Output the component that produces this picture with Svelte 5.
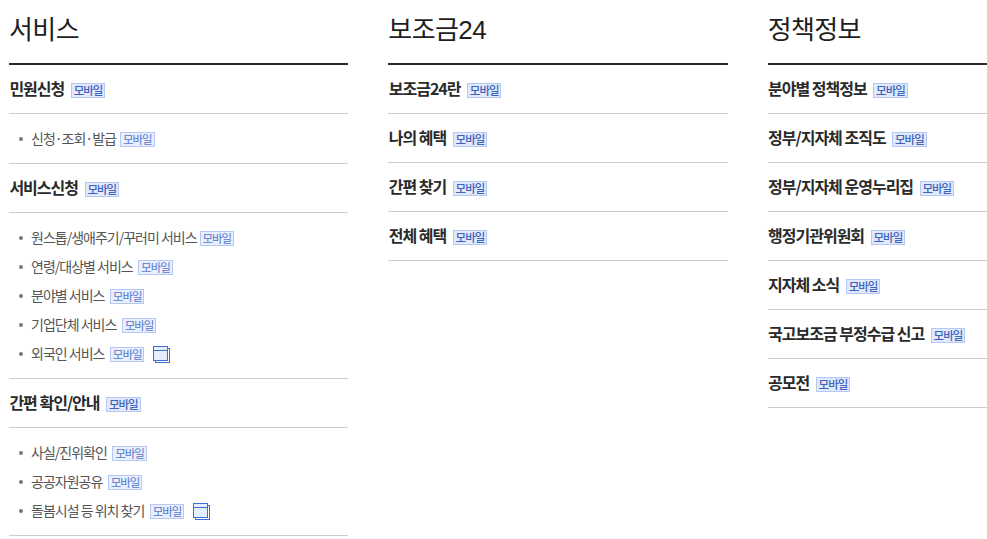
<script>
  const columns = [
    { title: '서비스', groups: [
      { name: '민원신청', items: [{ t: '신청·조회·발급', gap: 'snug' }] },
      { name: '서비스신청', items: [
        { t: '원스톱/생애주기/꾸러미 서비스', gap: 'tight' }, { t: '연령/대상별 서비스' }, { t: '분야별 서비스' }, { t: '기업단체 서비스' }, { t: '외국인 서비스', win: true }
      ] },
      { name: '간편 확인/안내', items: [{ t: '사실/진위확인' }, { t: '공공자원공유' }, { t: '돌봄시설 등 위치 찾기', win: true }] }
    ] },
    { title: '보조금24', groups: [
      { name: '보조금24란' }, { name: '나의 혜택' }, { name: '간편 찾기' }, { name: '전체 혜택' }
    ] },
    { title: '정책정보', groups: [
      { name: '분야별 정책정보' }, { name: '정부/지자체 조직도' }, { name: '정부/지자체 운영누리집' }, { name: '행정기관위원회' }, { name: '지자체 소식' }, { name: '국고보조금 부정수급 신고' }, { name: '공모전' }
    ] }
  ];
</script>

<div class="page">
  {#each columns as col}
    <section class="col">
      <h2>{col.title}</h2>
      {#each col.groups as g}
        <div class="group">
          <span class="name">{g.name}</span><span class="badge strong">모바일</span>
        </div>
        {#if g.items}
          <ul>
            {#each g.items as it}
              <li>
                <span class="text">{it.t}</span><span class="badge {it.gap ?? ''}">모바일</span>
                {#if it.win}
                  <svg class="win" width="17" height="17" viewBox="0 0 17 17" aria-hidden="true">
                    <rect x="2.5" y="2.5" width="14" height="14" fill="#fff" stroke="#3d70d6"/>
                    <rect x="0.5" y="0.5" width="14" height="14" fill="#e6edfc" stroke="#3d70d6"/>
                    <path d="M1 4.5h13" stroke="#3d70d6"/>
                  </svg>
                {/if}
              </li>
            {/each}
          </ul>
        {/if}
      {/each}
    </section>
  {/each}
</div>

<style>
  :global(body) { margin: 0; background: #fff; overflow: hidden; }
  .page {
    display: flex;
    gap: 40px;
    width: 987px;
    height: 539px;
    padding-left: 9px;
    box-sizing: border-box;
    overflow: hidden;
    font-family: "Noto Sans CJK KR", "Noto Sans", sans-serif;
    color: #222;
  }
  .col { flex: 0 0 339.33px; }
  h2 {
    margin: 0;
    height: 63px;
    border-bottom: 2px solid #2a2a2a;
    font-family: "Liberation Sans", "Noto Sans CJK KR", sans-serif;
    font-size: 26px;
    font-weight: 400;
    line-height: 61px;
    letter-spacing: -0.6px;
    color: #1e1e1e;
  }
  .group {
    height: 48px;
    border-bottom: 1px solid #ccc;
    display: flex;
    align-items: center;
  }
  .name {
    font-size: 16px;
    font-weight: 700;
    letter-spacing: -1px;
    color: #2a2a2a;
    margin-left: 0.4px;
    position: relative;
    top: -1px;
  }
  ul {
    list-style: none;
    margin: 0;
    padding: 10px 0;
    border-bottom: 1px solid #ccc;
  }
  li {
    height: 29px;
    display: flex;
    align-items: center;
    padding-left: 22px;
    position: relative;
  }
  li::before {
    content: "";
    position: absolute;
    left: 10px;
    top: 13px;
    width: 4px;
    height: 4px;
    border-radius: 50%;
    background: #777;
  }
  .text {
    font-size: 14px;
    letter-spacing: -1px;
    color: #555;
    position: relative;
    top: -1px;
  }
  .badge {
    box-sizing: border-box;
    width: 34.5px;
    height: 15px;
    margin-left: 5.5px;
    margin-top: 2px;
    border: 1px solid #b4c8f5;
    background: #e9effd;
    color: #5478cc;
    font-size: 11.5px;
    line-height: 13px;
    text-align: center;
    letter-spacing: -1px;
    font-weight: 400;
  }
  .badge.tight { margin-left: 3px; }
  .badge.snug { margin-left: 4px; }
  .badge.strong { font-weight: 500; color: #3f64bd; background: #e2e9fb; margin-left: 6.5px; }
  .win { margin-left: 9px; margin-top: 1px; }
</style>
